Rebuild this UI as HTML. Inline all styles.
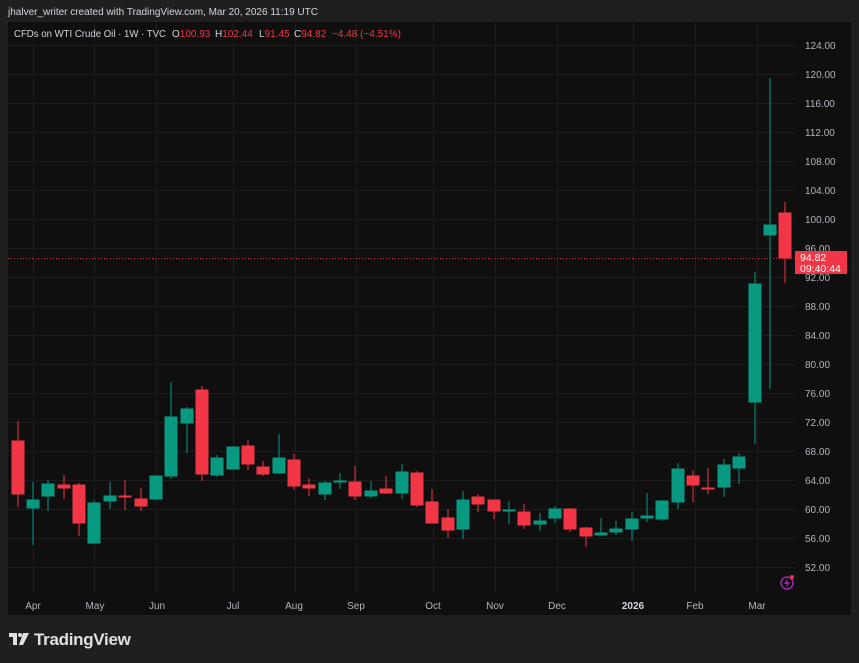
<!DOCTYPE html>
<html><head><meta charset="utf-8"><style>
html,body{margin:0;padding:0;background:#1f1f1f;width:859px;height:663px;overflow:hidden;font-family:"Liberation Sans",sans-serif}
svg{position:absolute;left:0;top:0}
</style></head><body>
<svg width="859" height="663" xmlns="http://www.w3.org/2000/svg" font-family="Liberation Sans, sans-serif">
<rect x="0" y="0" width="859" height="663" fill="#1f1f1f"/>
<text x="8" y="15" fill="#d1d4dc" font-size="10" textLength="310" lengthAdjust="spacingAndGlyphs">jhalver_writer created with TradingView.com, Mar 20, 2026 11:19 UTC</text>
<rect x="8" y="22" width="843" height="593" fill="#0f0f0f"/>
<g stroke="#1d1d1d" stroke-width="1">
<line x1="8" x2="795" y1="45.5" y2="45.5"/><line x1="8" x2="795" y1="74.5" y2="74.5"/><line x1="8" x2="795" y1="103.5" y2="103.5"/><line x1="8" x2="795" y1="132.5" y2="132.5"/><line x1="8" x2="795" y1="161.5" y2="161.5"/><line x1="8" x2="795" y1="190.5" y2="190.5"/><line x1="8" x2="795" y1="219.5" y2="219.5"/><line x1="8" x2="795" y1="248.5" y2="248.5"/><line x1="8" x2="795" y1="277.5" y2="277.5"/><line x1="8" x2="795" y1="306.5" y2="306.5"/><line x1="8" x2="795" y1="335.5" y2="335.5"/><line x1="8" x2="795" y1="364.5" y2="364.5"/><line x1="8" x2="795" y1="393.5" y2="393.5"/><line x1="8" x2="795" y1="422.5" y2="422.5"/><line x1="8" x2="795" y1="451.5" y2="451.5"/><line x1="8" x2="795" y1="480.5" y2="480.5"/><line x1="8" x2="795" y1="509.5" y2="509.5"/><line x1="8" x2="795" y1="538.5" y2="538.5"/><line x1="8" x2="795" y1="567.5" y2="567.5"/>
<line x1="33.5" x2="33.5" y1="22" y2="593"/><line x1="94.5" x2="94.5" y1="22" y2="593"/><line x1="156.5" x2="156.5" y1="22" y2="593"/><line x1="233.5" x2="233.5" y1="22" y2="593"/><line x1="295.5" x2="295.5" y1="22" y2="593"/><line x1="356.5" x2="356.5" y1="22" y2="593"/><line x1="433.5" x2="433.5" y1="22" y2="593"/><line x1="495.5" x2="495.5" y1="22" y2="593"/><line x1="557.5" x2="557.5" y1="22" y2="593"/><line x1="633.5" x2="633.5" y1="22" y2="593"/><line x1="695.5" x2="695.5" y1="22" y2="593"/><line x1="757.5" x2="757.5" y1="22" y2="593"/>
</g>
<g font-size="10" fill="#d1d4dc">
<text x="14" y="37" textLength="152" lengthAdjust="spacingAndGlyphs">CFDs on WTI Crude Oil · 1W · TVC</text>
<text x="172" y="37">O<tspan fill="#f23645">100.93</tspan></text>
<text x="215" y="37">H<tspan fill="#f23645">102.44</tspan></text>
<text x="259" y="37">L<tspan fill="#f23645">91.45</tspan></text>
<text x="294" y="37">C<tspan fill="#f23645">94.82</tspan></text>
<text x="332" y="37" fill="#f23645">−4.48 (−4.51%)</text>
</g>
<g font-size="10" fill="#b2b5be">
<text x="805" y="49">124.00</text><text x="805" y="78">120.00</text><text x="805" y="107">116.00</text><text x="805" y="136">112.00</text><text x="805" y="165">108.00</text><text x="805" y="194">104.00</text><text x="805" y="223">100.00</text><text x="805" y="252">96.00</text><text x="805" y="281">92.00</text><text x="805" y="310">88.00</text><text x="805" y="339">84.00</text><text x="805" y="368">80.00</text><text x="805" y="397">76.00</text><text x="805" y="426">72.00</text><text x="805" y="455">68.00</text><text x="805" y="484">64.00</text><text x="805" y="513">60.00</text><text x="805" y="542">56.00</text><text x="805" y="571">52.00</text>
</g>
<g font-size="10" fill="#b2b5be" text-anchor="middle">
<text x="33" y="609">Apr</text><text x="95" y="609">May</text><text x="157" y="609">Jun</text><text x="233" y="609">Jul</text><text x="294" y="609">Aug</text><text x="356" y="609">Sep</text><text x="433" y="609">Oct</text><text x="495" y="609">Nov</text><text x="557" y="609">Dec</text><text x="633" y="609" font-weight="bold" fill="#d1d4dc">2026</text><text x="695" y="609">Feb</text><text x="757" y="609">Mar</text>
</g>
<line x1="8" x2="795" y1="258.5" y2="258.5" stroke="#f23645" stroke-width="1" stroke-dasharray="1,2" opacity="0.8"/>
<g stroke="#f23645" fill="#f23645">
<line x1="18" x2="18" y1="421" y2="507"/><rect x="12" y="441" width="12" height="53"/>
<line x1="64" x2="64" y1="475" y2="499"/><rect x="58" y="485" width="12" height="3"/>
<line x1="79" x2="79" y1="483" y2="536"/><rect x="73" y="485" width="12" height="38"/>
<line x1="125" x2="125" y1="480" y2="510"/><rect x="119" y="496" width="12" height="1"/>
<line x1="141" x2="141" y1="488" y2="511"/><rect x="135" y="499" width="12" height="7"/>
<line x1="202" x2="202" y1="386" y2="481"/><rect x="196" y="390" width="12" height="84"/>
<line x1="248" x2="248" y1="440" y2="470"/><rect x="242" y="446" width="12" height="18"/>
<line x1="263" x2="263" y1="461" y2="476"/><rect x="257" y="467" width="12" height="7"/>
<line x1="294" x2="294" y1="454" y2="490"/><rect x="288" y="460" width="12" height="26"/>
<line x1="309" x2="309" y1="478" y2="496"/><rect x="303" y="485" width="12" height="3"/>
<line x1="355" x2="355" y1="466" y2="500"/><rect x="349" y="482" width="12" height="14"/>
<line x1="386" x2="386" y1="476" y2="494"/><rect x="380" y="489" width="12" height="4"/>
<line x1="417" x2="417" y1="471" y2="507"/><rect x="411" y="473" width="12" height="32"/>
<line x1="432" x2="432" y1="489" y2="523"/><rect x="426" y="502" width="12" height="21"/>
<line x1="448" x2="448" y1="509" y2="538"/><rect x="442" y="518" width="12" height="12"/>
<line x1="478" x2="478" y1="494" y2="512"/><rect x="472" y="497" width="12" height="7"/>
<line x1="494" x2="494" y1="500" y2="519"/><rect x="488" y="500" width="12" height="11"/>
<line x1="524" x2="524" y1="504" y2="529"/><rect x="518" y="512" width="12" height="13"/>
<line x1="570" x2="570" y1="508" y2="532"/><rect x="564" y="509" width="12" height="20"/>
<line x1="586" x2="586" y1="527" y2="547"/><rect x="580" y="528" width="12" height="8"/>
<line x1="693" x2="693" y1="470" y2="502"/><rect x="687" y="476" width="12" height="9"/>
<line x1="708" x2="708" y1="468" y2="494"/><rect x="702" y="488" width="12" height="1"/>
<line x1="785" x2="785" y1="202" y2="283"/><rect x="779" y="213" width="12" height="45"/>
</g>
<g stroke="#089981" fill="#089981">
<line x1="33" x2="33" y1="482" y2="545"/><rect x="27" y="500" width="12" height="8"/>
<line x1="48" x2="48" y1="480" y2="511"/><rect x="42" y="484" width="12" height="12"/>
<line x1="94" x2="94" y1="500" y2="544"/><rect x="88" y="503" width="12" height="40"/>
<line x1="110" x2="110" y1="482" y2="509"/><rect x="104" y="496" width="12" height="5"/>
<rect x="150" y="476" width="12" height="23"/>
<line x1="171" x2="171" y1="382" y2="479"/><rect x="165" y="417" width="12" height="59"/>
<line x1="187" x2="187" y1="407" y2="453"/><rect x="181" y="409" width="12" height="14"/>
<line x1="217" x2="217" y1="455" y2="477"/><rect x="211" y="458" width="12" height="17"/>
<line x1="233" x2="233" y1="446" y2="469"/><rect x="227" y="447" width="12" height="22"/>
<line x1="279" x2="279" y1="434" y2="473"/><rect x="273" y="458" width="12" height="15"/>
<line x1="325" x2="325" y1="481" y2="500"/><rect x="319" y="483" width="12" height="11"/>
<line x1="340" x2="340" y1="473" y2="489"/><rect x="334" y="481" width="12" height="1"/>
<line x1="371" x2="371" y1="481" y2="498"/><rect x="365" y="491" width="12" height="5"/>
<line x1="402" x2="402" y1="464" y2="499"/><rect x="396" y="472" width="12" height="21"/>
<line x1="463" x2="463" y1="491" y2="539"/><rect x="457" y="500" width="12" height="29"/>
<line x1="509" x2="509" y1="501" y2="524"/><rect x="503" y="510" width="12" height="1"/>
<line x1="540" x2="540" y1="513" y2="531"/><rect x="534" y="521" width="12" height="3"/>
<line x1="555" x2="555" y1="506" y2="523"/><rect x="549" y="509" width="12" height="9"/>
<line x1="601" x2="601" y1="518" y2="535"/><rect x="595" y="533" width="12" height="2"/>
<line x1="616" x2="616" y1="521" y2="535"/><rect x="610" y="529" width="12" height="3"/>
<line x1="632" x2="632" y1="512" y2="541"/><rect x="626" y="519" width="12" height="10"/>
<line x1="647" x2="647" y1="493" y2="522"/><rect x="641" y="516" width="12" height="2"/>
<line x1="662" x2="662" y1="500" y2="521"/><rect x="656" y="501" width="12" height="18"/>
<line x1="678" x2="678" y1="463" y2="509"/><rect x="672" y="469" width="12" height="33"/>
<line x1="724" x2="724" y1="459" y2="497"/><rect x="718" y="465" width="12" height="22"/>
<line x1="739" x2="739" y1="453" y2="484"/><rect x="733" y="457" width="12" height="11"/>
<line x1="755" x2="755" y1="272" y2="444"/><rect x="749" y="284" width="12" height="118"/>
<line x1="770" x2="770" y1="78" y2="389"/><rect x="764" y="225" width="12" height="10"/>
</g>
<rect x="795" y="251" width="52" height="23" fill="#f23645"/>
<text x="800" y="261" font-size="10.5" fill="#fff">94.82</text>
<text x="800" y="272" font-size="10.5" fill="#fff">09:40:44</text>
<circle cx="787" cy="583" r="6" fill="none" stroke="#9c27b0" stroke-width="1.5"/>
<path d="M788 578 L784 584 L787 584 L786 588 L790 582 L787 582 Z" fill="#9c27b0"/>
<circle cx="792" cy="577" r="2" fill="#f23645"/>
<g fill="#e0e0e0">
<path d="M9 633 h8 v12 h-4 v-8 h-4 z"/><circle cx="20" cy="635" r="2"/><path d="M23 633 h6 l-6 12 h-4 z"/>
</g>
<text x="34" y="645" font-size="17" fill="#e0e0e0" font-weight="bold" letter-spacing="-0.3">TradingView</text>
</svg>
</body></html>
